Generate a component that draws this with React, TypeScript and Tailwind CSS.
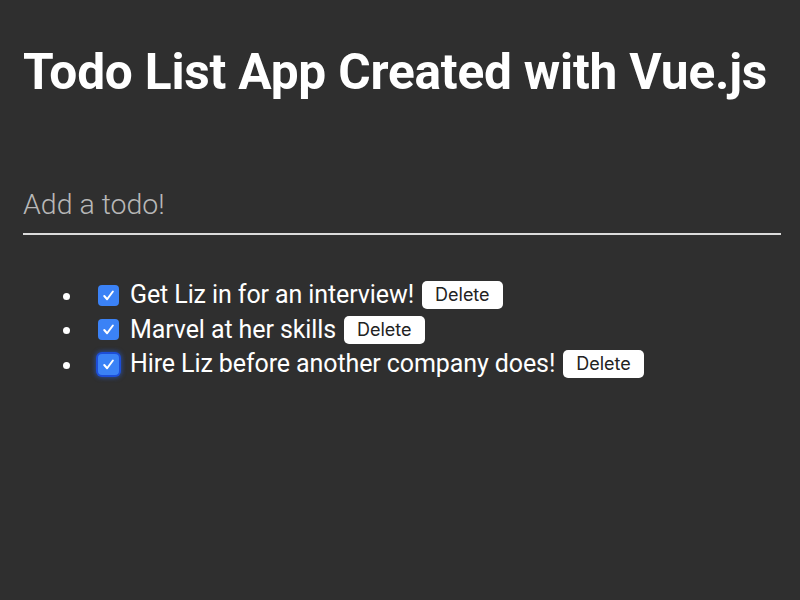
import { useState } from 'react';

type Todo = { id: number; text: string; done: boolean };

const initialTodos: Todo[] = [
  { id: 1, text: 'Get Liz in for an interview!', done: true },
  { id: 2, text: 'Marvel at her skills', done: true },
  { id: 3, text: 'Hire Liz before another company does!', done: true },
];

const Check = ({ checked, onClick, focused }: { checked: boolean; onClick: () => void; focused?: boolean }) => (
  <button
    type="button"
    onClick={onClick}
    className={`flex h-[21px] w-[21px] shrink-0 items-center justify-center rounded-[4px] ${
      checked ? 'bg-[#3b82f6]' : 'bg-white'
    } ${focused ? 'shadow-[0_0_0_2px_#1d4ed8,0_0_4px_3px_rgba(37,99,235,0.5)]' : ''}`}
  >
    {checked && (
      <svg width="15" height="15" viewBox="0 0 12 12" fill="none" stroke="white" strokeWidth="1.6" strokeLinecap="round" strokeLinejoin="round">
        <path d="M2.6 6.4l2.3 2.6L9.5 2.8" />
      </svg>
    )}
  </button>
);

export default function App() {
  const [todos, setTodos] = useState<Todo[]>(initialTodos);
  const [draft, setDraft] = useState('');

  const toggle = (id: number) =>
    setTodos(todos.map((t) => (t.id === id ? { ...t, done: !t.done } : t)));

  const remove = (id: number) => setTodos(todos.filter((t) => t.id !== id));

  return (
    <div className="min-h-[600px] bg-[#2f2f2f] px-[23px] pt-[40px] font-['Roboto',sans-serif] text-white">
      <h1 className="text-[49.6px] font-bold leading-[64px] tracking-[-0.2px]">Todo List App Created with Vue.js</h1>

      <input
        value={draft}
        onChange={(e) => setDraft(e.target.value)}
        onKeyDown={(e) => {
          if (e.key === 'Enter' && draft.trim()) {
            setTodos([...todos, { id: Date.now(), text: draft.trim(), done: false }]);
            setDraft('');
          }
        }}
        placeholder="Add a todo!"
        className="mt-[74px] block h-[57px] w-[758px] border-b-2 border-[#dcdcdc] bg-transparent pb-[2px] text-[28.5px] font-light text-white placeholder:text-[#b8b8b8] focus:outline-none"
      />

      <ul className="mt-[43px] list-disc pl-[60px] text-[25px] leading-[34.5px] marker:text-[22px]">
        {todos.map((todo, i) => (
          <li key={todo.id} className="pl-[15px]">
            <div className="flex items-center gap-[11px]">
              <Check checked={todo.done} onClick={() => toggle(todo.id)} focused={i === todos.length - 1} />
              <span className="tracking-[-0.1px]">{todo.text}</span>
              <button
                type="button"
                onClick={() => remove(todo.id)}
                className="-ml-[3px] h-[28px] rounded-[5px] bg-white px-[13px] font-['Inter',sans-serif] text-[18px] leading-[28px] text-[#222]"
              >
                Delete
              </button>
            </div>
          </li>
        ))}
      </ul>
    </div>
  );
}
